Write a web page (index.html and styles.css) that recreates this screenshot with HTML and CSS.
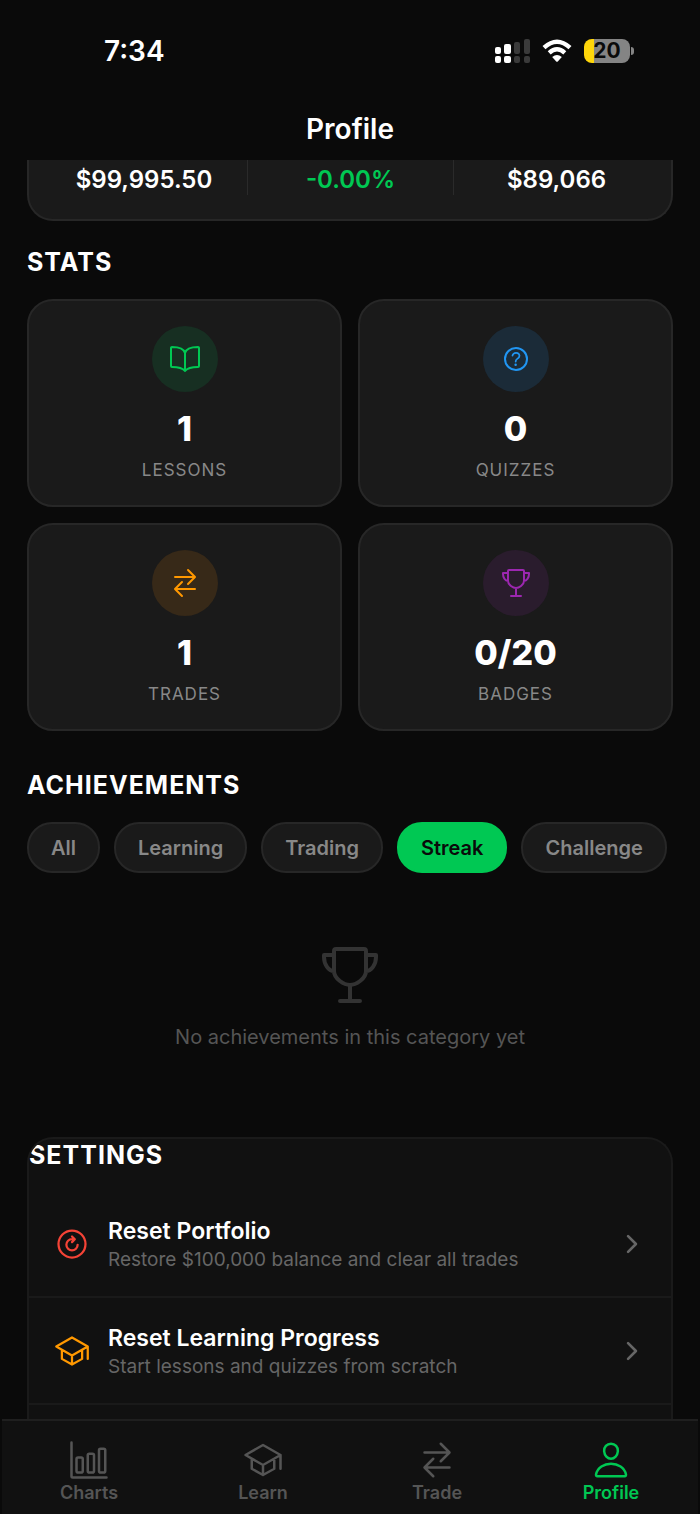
FILE: index.html
```html
<!DOCTYPE html>
<html lang="en">
<head>
<meta charset="utf-8">
<meta name="viewport" content="width=device-width, initial-scale=1">
<title>Profile</title>
<link rel="stylesheet" href="styles.css">
</head>
<body>
<svg class="sprite" aria-hidden="true">
  <symbol id="i-book" viewBox="0 0 512 512"><path d="M256 160c16-63.16 76.43-95.41 208-96a15.94 15.94 0 0116 16v288a16 16 0 01-16 16c-128 0-177.45 25.81-208 64-30.37-38-80-64-208-64-9.88 0-16-8.05-16-17.93V80a15.94 15.94 0 0116-16c131.57.59 192 32.84 208 96zM256 160v288"/></symbol>
  <symbol id="i-help" viewBox="0 0 512 512"><path d="M256 80a176 176 0 10176 176A176 176 0 00256 80z"/><path stroke-width="28" d="M200 202.29s.84-17.5 19.57-32.57C230.68 160.77 244 158.18 256 158c10.93-.14 20.69 1.67 26.53 4.45 10 4.76 29.47 16.38 29.47 41.09 0 26-17 37.81-36.37 50.8S251 281.43 251 296"/><circle cx="250" cy="348" r="20" fill="currentColor" stroke="none"/></symbol>
  <symbol id="i-swap" viewBox="0 0 512 512"><path d="M304 48l112 112-112 112M398.87 160H96M208 464L96 352l112-112M114 352h302"/></symbol>
  <symbol id="i-trophy" viewBox="0 0 512 512"><path d="M176 464h160M256 464V336M384 224c0-50.64-.08-134.63-.1-160a16 16 0 00-16-16l-223.79.26a16 16 0 00-16 15.95c0 30.58-.13 129.17-.13 159.79 0 64.28 83 112 128 112S384 288.28 384 224zM128 96H48v16c0 55.22 33.55 112 80 112M384 96h80v16c0 55.22-33.55 112-80 112"/></symbol>
  <symbol id="i-refresh" viewBox="0 0 512 512"><circle cx="256" cy="256" r="192"/><path d="M288 193s12.18-6-32-6a80 80 0 1080 80M256 149l40 40-40 40"/></symbol>
  <symbol id="i-school" viewBox="0 0 512 512"><path d="M32 192L256 64l224 128-224 128L32 192zM112 240v128l144 80 144-80V240M480 368V192M256 320v128"/></symbol>
  <symbol id="i-chart" viewBox="0 0 512 512"><path d="M32 32v432a16 16 0 0016 16h432"/><rect x="96" y="224" width="80" height="192" rx="20"/><rect x="240" y="176" width="80" height="240" rx="20"/><rect x="384" y="112" width="80" height="304" rx="20"/></symbol>
  <symbol id="i-person" viewBox="0 0 512 512"><path d="M344 144c-3.92 52.87-44 96-88 96s-84.15-43.12-88-96c-4-55 35-96 88-96s92 42 88 96zM256 304c-87 0-175.3 48-191.64 138.6C62.39 453.52 68.57 464 80 464h352c11.44 0 17.62-10.48 15.65-21.4C431.3 352 343 304 256 304z"/></symbol>
  <symbol id="i-chevron" viewBox="0 0 512 512"><path stroke-width="48" d="M184 112l144 144-144 144"/></symbol>
</svg>
<div class="app">
  <div class="status-bar">
    <time class="clock">7:34</time>
    <div class="indicators">
      <svg class="signal" viewBox="0 0 35 24" aria-hidden="true">
        <g fill="#fff"><rect y="8" width="6" height="7" rx="2"/><rect x="9" y="5" width="7" height="10" rx="2"/><rect y="17" width="6" height="7" rx="2"/><rect x="9" y="17" width="7" height="7" rx="2"/></g>
        <g fill="#3a3a3a"><rect x="19" y="3" width="6" height="12" rx="2"/><rect x="29" y="0" width="6" height="15" rx="2"/><rect x="19" y="17" width="6" height="7" rx="2"/><rect x="29" y="17" width="6" height="7" rx="2"/></g>
      </svg>
      <svg class="wifi" viewBox="0 0 30 24" aria-hidden="true">
        <path d="M2 8.600Q15-3.200 28 8.600M7.200 13.800Q15 6.800 22.800 13.800" fill="none" stroke="#fff" stroke-width="4.400"/>
        <path d="M10.200 17.900Q15 14 19.800 17.900L15.800 22.400Q15 23.200 14.200 22.400Z" fill="#fff"/>
      </svg>
      <div class="battery"><span class="battery-level">20</span></div>
    </div>
  </div>
  <header class="title-bar"><h1 class="title">Profile</h1></header>
  <main class="content">
    <section class="portfolio">
      <div class="figure">$99,995.50</div>
      <div class="figure gain">-0.00%</div>
      <div class="figure">$89,066</div>
    </section>
    <section class="section">
      <h2 class="heading">STATS</h2>
      <div class="stats">
        <article class="card"><span class="badge green"><svg class="icon"><use href="#i-book"/></svg></span><strong class="value">1</strong><span class="label">LESSONS</span></article>
        <article class="card"><span class="badge blue"><svg class="icon"><use href="#i-help"/></svg></span><strong class="value">0</strong><span class="label">QUIZZES</span></article>
        <article class="card"><span class="badge orange"><svg class="icon"><use href="#i-swap"/></svg></span><strong class="value">1</strong><span class="label">TRADES</span></article>
        <article class="card"><span class="badge purple"><svg class="icon"><use href="#i-trophy"/></svg></span><strong class="value">0/20</strong><span class="label">BADGES</span></article>
      </div>
    </section>
    <section class="section achievements">
      <h2 class="heading">ACHIEVEMENTS</h2>
      <div class="chips">
        <button class="chip" type="button">All</button>
        <button class="chip" type="button">Learning</button>
        <button class="chip" type="button">Trading</button>
        <button class="chip selected" type="button" aria-pressed="true">Streak</button>
        <button class="chip" type="button">Challenge</button>
      </div>
      <div class="empty">
        <svg class="icon huge"><use href="#i-trophy"/></svg>
        <p class="empty-text">No achievements in this category yet</p>
      </div>
    </section>
    <section class="settings">
      <h2 class="heading">SETTINGS</h2>
      <button class="row" type="button">
        <svg class="icon medium red"><use href="#i-refresh"/></svg>
        <span class="row-text"><span class="row-title">Reset Portfolio</span><span class="row-note">Restore $100,000 balance and clear all trades</span></span>
        <svg class="icon small"><use href="#i-chevron"/></svg>
      </button>
      <button class="row" type="button">
        <svg class="icon medium amber"><use href="#i-school"/></svg>
        <span class="row-text"><span class="row-title">Reset Learning Progress</span><span class="row-note">Start lessons and quizzes from scratch</span></span>
        <svg class="icon small"><use href="#i-chevron"/></svg>
      </button>
    </section>
  </main>
  <nav class="tabs">
    <a class="tab" href="#charts"><svg class="icon large"><use href="#i-chart"/></svg>Charts</a>
    <a class="tab" href="#learn"><svg class="icon large"><use href="#i-school"/></svg>Learn</a>
    <a class="tab" href="#trade"><svg class="icon large"><use href="#i-swap"/></svg>Trade</a>
    <a class="tab active" href="#profile" aria-current="page"><svg class="icon large"><use href="#i-person"/></svg>Profile</a>
  </nav>
</div>
</body>
</html>
```
FILE: styles.css
```css
* { box-sizing: border-box; }

body {
  margin: 0;
  background: #0a0a0a;
  color: #fff;
  font-family: Inter, "Liberation Sans", sans-serif;
}

h1, h2, p { margin: 0; }
button { font: inherit; cursor: pointer; }

.sprite { position: absolute; width: 0; height: 0; }

.app {
  display: flex;
  flex-direction: column;
  min-height: 100vh;
}

.icon {
  flex: none;
  width: 32px;
  height: 32px;
  fill: none;
  stroke: currentColor;
  stroke-width: 32px;
  stroke-linecap: round;
  stroke-linejoin: round;
}
.icon.small { width: 28px; height: 28px; color: #666; }
.icon.medium { width: 36px; height: 36px; }
.icon.large { width: 40px; height: 40px; }
.icon.huge { width: 64px; height: 64px; color: #333; }
.red { color: #f44336; }
.amber { color: #ff9800; }

/* Status bar */
.status-bar {
  display: flex;
  align-items: center;
  justify-content: space-between;
  height: 102px;
  padding: 0 66px 0 104px;
}
.clock { font-size: 28px; font-weight: 600; line-height: 32px; }
.indicators { display: flex; align-items: center; gap: 12px; }
.signal { width: 35px; height: 24px; }
.wifi { width: 30px; height: 24px; }
.battery {
  position: relative;
  width: 46px;
  height: 24px;
  margin-right: 4px;
  border-radius: 8px;
  background: linear-gradient(to right, #ffd60a 10px, #848484 10px);
  color: #0a0a0a;
  text-align: center;
}
.battery::after {
  content: "";
  position: absolute;
  top: 8px;
  right: -4px;
  width: 3px;
  height: 8px;
  border-radius: 0 3px 3px 0;
  background: #848484;
}
.battery-level { font-size: 21px; font-weight: 700; line-height: 24px; }

.title-bar { height: 58px; padding-top: 11px; text-align: center; }
.title { font-size: 28px; font-weight: 600; line-height: 32px; }

.content {
  display: flex;
  flex: 1;
  flex-direction: column;
  padding: 0 27px;
}

/* Portfolio summary */
.portfolio {
  display: grid;
  grid-template-columns: repeat(3, 1fr);
  padding: 0 12px 24px;
  border: 2px solid #272727;
  border-top: 0;
  border-radius: 0 0 26px 26px;
  background: #1a1a1a;
}
.figure {
  padding: 4px 0 0;
  height: 35px;
  font-size: 24px;
  font-weight: 600;
  line-height: 32px;
  text-align: center;
}
.figure + .figure { border-left: 1px solid #2a2a2a; }
.gain { color: #00c853; }

.section { margin-top: 25px; }
.heading { font-size: 25px; font-weight: 700; line-height: 32px; letter-spacing: 1px; }

/* Stats */
.stats {
  display: grid;
  grid-template-columns: 1fr 1fr;
  gap: 16px;
  margin-top: 21px;
}
.card {
  display: flex;
  flex-direction: column;
  align-items: center;
  padding: 25px 24px;
  border: 2px solid #272727;
  border-radius: 26px;
  background: #1a1a1a;
}
.badge {
  display: grid;
  place-items: center;
  width: 66px;
  height: 66px;
  border-radius: 50%;
}
.green { color: #00c853; background: #172f22; }
.blue { color: #2196f3; background: #1b2b38; }
.orange { color: #ff9800; background: #372918; }
.purple { color: #9c27b0; background: #2a1c2d; }
.value { margin-top: 16px; font-size: 34px; font-weight: 800; line-height: 42px; }
.label {
  margin-top: 10px;
  color: #888;
  font-size: 17px;
  line-height: 20px;
  letter-spacing: 1px;
}

/* Achievements */
.achievements { margin-top: 38px; }
.chips { display: flex; gap: 14px; margin-top: 21px; }
.chip {
  padding: 10px 22px 9px;
  border: 2px solid #272727;
  border-radius: 25px;
  background: #1a1a1a;
  color: #888;
  font-size: 20px;
  font-weight: 600;
  line-height: 28px;
}
.chip.selected { border-color: #00c853; background: #00c853; color: #0a0a0a; }
.empty {
  display: flex;
  flex-direction: column;
  align-items: center;
  gap: 16px;
  padding: 70px 0 86px;
}
.empty-text { color: #555; font-size: 20px; line-height: 28px; }

/* Settings */
.settings {
  flex: 1;
  overflow: hidden;
  border: 2px solid #1a1a1a;
  border-bottom: 0;
  border-radius: 26px 26px 0 0;
  background: #111;
}
.settings .heading { margin-bottom: 20px; }
.row {
  display: flex;
  align-items: center;
  gap: 18px;
  width: 100%;
  padding: 25px 25px 24px;
  border: 0;
  border-bottom: 2px solid #1a1a1a;
  background: none;
  color: #fff;
  text-align: left;
}
.row-text { display: flex; flex: 1; flex-direction: column; gap: 2px; }
.row-title { font-size: 23px; font-weight: 600; line-height: 30px; }
.row-note { color: #666; font-size: 19px; line-height: 24px; }

/* Tab bar */
.tabs {
  display: grid;
  grid-template-columns: repeat(4, 1fr);
  height: 95px;
  margin: 0 2px;
  padding-top: 19px;
  border-top: 2px solid #1f1f1f;
  background: #111;
}
.tab {
  display: flex;
  flex-direction: column;
  align-items: center;
  gap: 3px;
  color: #555;
  font-size: 18px;
  font-weight: 600;
  line-height: 20px;
  text-decoration: none;
}
.tab.active { color: #00c853; }
```
